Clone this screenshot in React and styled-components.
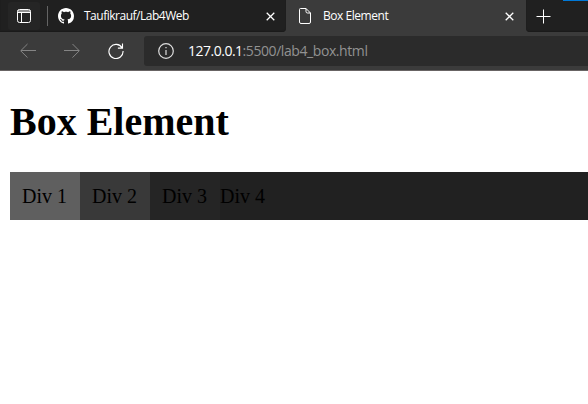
import React from "react";
import styled, { createGlobalStyle } from "styled-components";

const GlobalStyle = createGlobalStyle`
  * { box-sizing: border-box; }
  body { margin: 0; background: #fff; overflow: hidden; }
`;

const Browser = styled.div`
  width: 588px;
  height: 404px;
  overflow: hidden;
  background: #fff;
`;

const Chrome = styled.header`
  background: #3b3b3b;
  border-bottom: 1px solid #686464;
  height: 71px;
  font-family: "Open Sans", "Noto Sans", sans-serif;
`;

const TabStrip = styled.div`
  display: flex;
  height: 32px;
`;

const InactiveTabs = styled.div`
  display: flex;
  align-items: center;
  width: 286px;
  background: #202020;
  border-bottom-right-radius: 4px;
  box-shadow: inset 0 -1px 1px #1a1a1a;
`;

const TabActions = styled.div`
  display: grid;
  place-items: center;
  width: 32px;
  height: 28px;
  margin: 2px 7px 2px 8px;
  border-radius: 3px;
  background: #252525;
`;

const Divider = styled.div`
  width: 1px;
  height: 20px;
  margin-right: 10px;
  background: #646464;
`;

const ActiveTab = styled.div`
  display: flex;
  align-items: center;
  width: 240px;
  padding-left: 12px;
  background: #3b3b3b;
`;

const TabTitle = styled.span`
  width: ${(p) => p.$width}px;
  margin-left: ${(p) => p.$gap}px;
  color: #fff;
  font-size: 12px;
  line-height: 16px;
  letter-spacing: ${(p) => p.$tracking}px;
  white-space: nowrap;
`;

const StripEnd = styled.div`
  display: flex;
  flex: 1;
  align-items: center;
  justify-content: space-between;
  padding-left: 10px;
  background: #202020;
  border-bottom-left-radius: 4px;
  box-shadow: inset 0 -1px 1px #1a1a1a;
`;

const WindowAccent = styled.div`
  align-self: flex-start;
  width: 25px;
  height: 1px;
  background: #0078d7;
`;

const Toolbar = styled.div`
  display: flex;
  align-items: center;
  height: 38px;
  padding: 0 0 0 20px;
`;

const Navigation = styled.nav`
  display: flex;
  gap: 28px;
  width: 124px;
`;

const AddressBar = styled.div`
  display: flex;
  align-items: center;
  flex: 1;
  height: 30px;
  padding-left: 14px;
  background: #2b2b2b;
  border-radius: 3px 0 0 3px;
`;

const Address = styled.span`
  margin-left: 14px;
  color: #929292;
  font-size: 14px;
  line-height: 20px;
  letter-spacing: -0.42px;
  white-space: nowrap;
`;

const Host = styled.span`
  color: #fff;
  letter-spacing: -0.5px;
`;

const Icon = styled.svg`
  display: block;
  flex: none;
  fill: none;
  stroke: ${(p) => p.$color || "#fff"};
  stroke-width: ${(p) => p.$weight || 1};
`;

const GithubIcon = styled(Icon)`
  fill: #fff;
  stroke: none;
`;

const Page = styled.main`
  padding-left: 10px;
  font-family: "Liberation Serif", "Times New Roman", serif;
  color: #000;
`;

const Heading = styled.h1`
  margin: 0;
  padding-top: 28px;
  height: 101px;
  font-size: 40px;
  line-height: 46px;
`;

const BoxRow = styled.div`
  display: flex;
  height: 48px;
  background: #212121;
  font-size: 20px;
  line-height: 48px;
`;

const Box = styled.div`
  width: 70px;
  padding-left: ${(p) => p.$indent}px;
  background: ${(p) => p.$fill};
  white-space: nowrap;
`;

const boxes = [
  { label: "Div 1", fill: "#5f5f5f", indent: 12 },
  { label: "Div 2", fill: "#393939", indent: 12 },
  { label: "Div 3", fill: "#252525", indent: 12 },
  { label: "Div 4", fill: "#212121", indent: 0 },
];

function Close() {
  return (
    <Icon width="9" height="9" viewBox="0 0 9 9" $weight={1.25}>
      <path d="M.7.7 8.3 8.3M8.3.7.7 8.3" />
    </Icon>
  );
}

export default function App() {
  return (
    <Browser>
      <GlobalStyle />
      <Chrome>
        <TabStrip>
          <InactiveTabs>
            <TabActions>
              <Icon width="14" height="14" viewBox="0 0 14 14">
                <rect x=".5" y=".5" width="13" height="13" rx="2" />
                <path d="M.5 2H13.5M.5 3.5H13.5M4.5 3.5V13.5" />
              </Icon>
            </TabActions>
            <Divider />
            <GithubIcon width="16" height="16" viewBox="0 0 16 16">
              <path d="M8 0C3.58 0 0 3.58 0 8c0 3.54 2.29 6.53 5.47 7.59.4.07.55-.17.55-.38 0-.19-.01-.82-.01-1.49-2.01.37-2.53-.49-2.69-.94-.09-.23-.48-.94-.82-1.13-.28-.15-.68-.52-.01-.53.63-.01 1.08.58 1.23.82.72 1.21 1.87.87 2.33.66.07-.52.28-.87.51-1.07-1.78-.2-3.64-.89-3.64-3.95 0-.87.31-1.59.82-2.15-.08-.2-.36-1.02.08-2.12 0 0 .67-.21 2.2.82.64-.18 1.32-.27 2-.27s1.36.09 2 .27c1.53-1.04 2.2-.82 2.2-.82.44 1.1.16 1.92.08 2.12.51.56.82 1.27.82 2.15 0 3.07-1.87 3.75-3.65 3.95.29.25.54.73.54 1.48 0 1.07-.01 1.93-.01 2.2 0 .21.15.46.55.38A8.01 8.01 0 0 0 16 8c0-4.42-3.58-8-8-8Z" />
            </GithubIcon>
            <TabTitle $gap={10} $width={182} $tracking={-0.49}>Taufikrauf/Lab4Web</TabTitle>
            <Close />
          </InactiveTabs>
          <ActiveTab>
            <Icon width="14" height="16" viewBox="0 0 14 16">
              <path d="M2.5.5H8L12.5 5V14Q12.5 15.5 11 15.5H3Q1.5 15.5 1.5 14V1.5Q1.5.5 2.5.5ZM8 .5V3.5Q8 5 9.5 5H12.5" />
            </Icon>
            <TabTitle $gap={11} $width={182} $tracking={-0.46}>Box Element</TabTitle>
            <Close />
          </ActiveTab>
          <StripEnd>
            <Icon width="15" height="15" viewBox="0 0 15 15">
              <path d="M7.5.5V14.5M.5 7.5H14.5" />
            </Icon>
            <WindowAccent />
          </StripEnd>
        </TabStrip>
        <Toolbar>
          <Navigation>
            <Icon width="16" height="16" viewBox="0 0 16 16" $color="#858585">
              <path d="M7.5 1 .7 7.8 7.5 14.6M1 7.5H16" />
            </Icon>
            <Icon width="16" height="16" viewBox="0 0 16 16" $color="#858585">
              <path d="M8.5 1 15.3 7.8 8.5 14.6M0 7.5H15" />
            </Icon>
            <Icon width="16" height="16" viewBox="0 0 17 17" $weight={1.2}>
              <path d="M15 5.2A7.5 7.5 0 1 0 16 8.5M15.4.5V5.4H10.5" />
            </Icon>
          </Navigation>
          <AddressBar>
            <Icon width="16" height="16" viewBox="0 0 16 16" $color="#dedede" $weight={1.2}>
              <circle cx="8" cy="8" r="7.3" />
              <path d="M8 7V12M8 4V5.3" />
            </Icon>
            <Address><Host>127.0.0.1</Host>:5500/lab4_box.html</Address>
          </AddressBar>
        </Toolbar>
      </Chrome>
      <Page>
        <Heading>Box Element</Heading>
        <BoxRow>
          {boxes.map((box) => (
            <Box key={box.label} $fill={box.fill} $indent={box.indent}>{box.label}</Box>
          ))}
        </BoxRow>
      </Page>
    </Browser>
  );
}
